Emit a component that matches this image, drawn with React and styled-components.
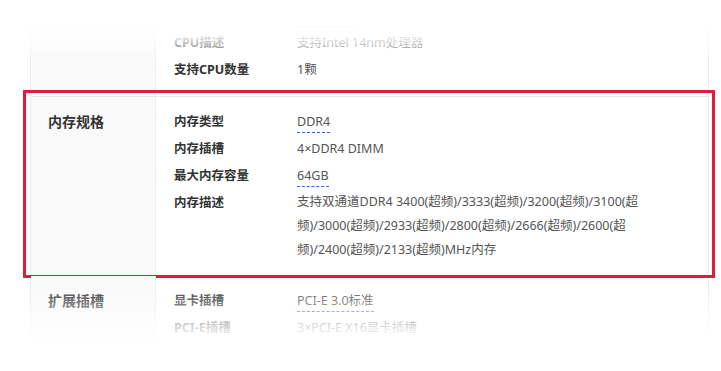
import React from "react";
import styled, { createGlobalStyle } from "styled-components";

const groups = [
  {
    title: "处理器",
    rows: [
      { label: "CPU系列", value: "Intel 10代", link: true },
      { label: "CPU描述", value: "支持Intel 14nm处理器" },
      { label: "支持CPU数量", value: "1颗" },
    ],
  },
  {
    title: "内存规格",
    highlight: true,
    rows: [
      { label: "内存类型", value: "DDR4", link: true },
      { label: "内存插槽", value: "4×DDR4 DIMM" },
      { label: "最大内存容量", value: "64GB", link: true },
      {
        label: "内存描述",
        value:
          "支持双通道DDR4 3400(超频)/3333(超频)/3200(超频)/3100(超频)/3000(超频)/2933(超频)/2800(超频)/2666(超频)/2600(超频)/2400(超频)/2133(超频)MHz内存",
        wide: true,
      },
    ],
  },
  {
    title: "扩展插槽",
    rows: [
      { label: "显卡插槽", value: "PCI-E 3.0标准", link: true },
      { label: "PCI-E插槽", value: "3×PCI-E X16显卡插槽" },
      { label: "PCI插槽", value: "2×PCI-E X1插槽" },
    ],
  },
];

export default function App() {
  return (
    <>
      <GlobalStyle />
      <Page>
        <SpecTable>
          {groups.map((g) => (
            <Group key={g.title} $highlight={g.highlight}>
              <GroupTitle>{g.title}</GroupTitle>
              <GroupBody>
                {g.rows.map((r) => (
                  <Row key={r.label}>
                    <Label>{r.label}</Label>
                    <Value $wide={r.wide}>
                      {r.link ? <Dotted>{r.value}</Dotted> : r.value}
                    </Value>
                  </Row>
                ))}
              </GroupBody>
            </Group>
          ))}
        </SpecTable>
        <FadeTop />
        <FadeBottom />
      </Page>
    </>
  );
}

/* ================== STYLES ================== */

const GlobalStyle = createGlobalStyle`
  html, body {
    margin: 0;
    padding: 0;
    background: #fff;
  }
  body {
    font-family: "Noto Sans", "Noto Sans CJK SC", sans-serif;
    color: #333;
  }
`;

const Page = styled.div`
  position: relative;
  width: 721px;
  height: 371px;
  overflow: hidden;
  background: #fff;
`;

const SpecTable = styled.div`
  margin: -9px 0 0 30px;
  width: 679px;
  border-left: 1px solid #ececec;
  border-right: 1px solid #ececec;
  box-sizing: border-box;
`;

const Group = styled.div`
  position: relative;
  display: flex;
  border-bottom: 1px solid #e8e8e8;

  ${(p) =>
    p.$highlight &&
    `
    &::after {
      content: "";
      position: absolute;
      top: -7px;
      left: -8px;
      right: -7px;
      bottom: -3px;
      border: 3px solid #dd1d3b;
      pointer-events: none;
    }
  `}
`;

const GroupTitle = styled.div`
  width: 125px;
  flex: none;
  box-sizing: border-box;
  padding: 14px 0 0 17px;
  background: #f9f9f9;
  border-right: 1px solid #ececec;
  font-family: "Noto Sans CJK SC", sans-serif;
  font-size: 14px;
  font-weight: bold;
  color: #333;
  line-height: 20px;
`;

const GroupBody = styled.div`
  flex: 1;
  padding: 11px 0 13px 18px;
`;

const Row = styled.div`
  display: grid;
  grid-template-columns: 123px 1fr;
  line-height: 27px;
`;

const Label = styled.div`
  font-size: 12.5px;
  font-weight: bold;
  color: #333;
`;

const Value = styled.div`
  font-size: 12.5px;
  color: #555;
  max-width: ${(p) => (p.$wide ? "372px" : "none")};
  line-height: ${(p) => (p.$wide ? "24px" : "27px")};
  padding: ${(p) => (p.$wide ? "1px 0 0" : "0")};
`;

const Dotted = styled.span`
  border-bottom: 1px dashed #2f6bd6;
  padding-bottom: 2px;
`;

const FadeTop = styled.div`
  position: absolute;
  left: 0;
  right: 0;
  top: 0;
  height: 62px;
  background: linear-gradient(
    to bottom,
    rgba(255, 255, 255, 1) 0px,
    rgba(255, 255, 255, 1) 22px,
    rgba(255, 255, 255, 0.8) 40px,
    rgba(255, 255, 255, 0) 62px
  );
  pointer-events: none;
`;

const FadeBottom = styled.div`
  position: absolute;
  left: 0;
  right: 0;
  top: 284px;
  bottom: 0;
  background: linear-gradient(
    to bottom,
    rgba(255, 255, 255, 0) 0px,
    rgba(255, 255, 255, 0.55) 30px,
    rgba(255, 255, 255, 0.85) 46px,
    rgba(255, 255, 255, 1) 60px
  );
  pointer-events: none;
`;
